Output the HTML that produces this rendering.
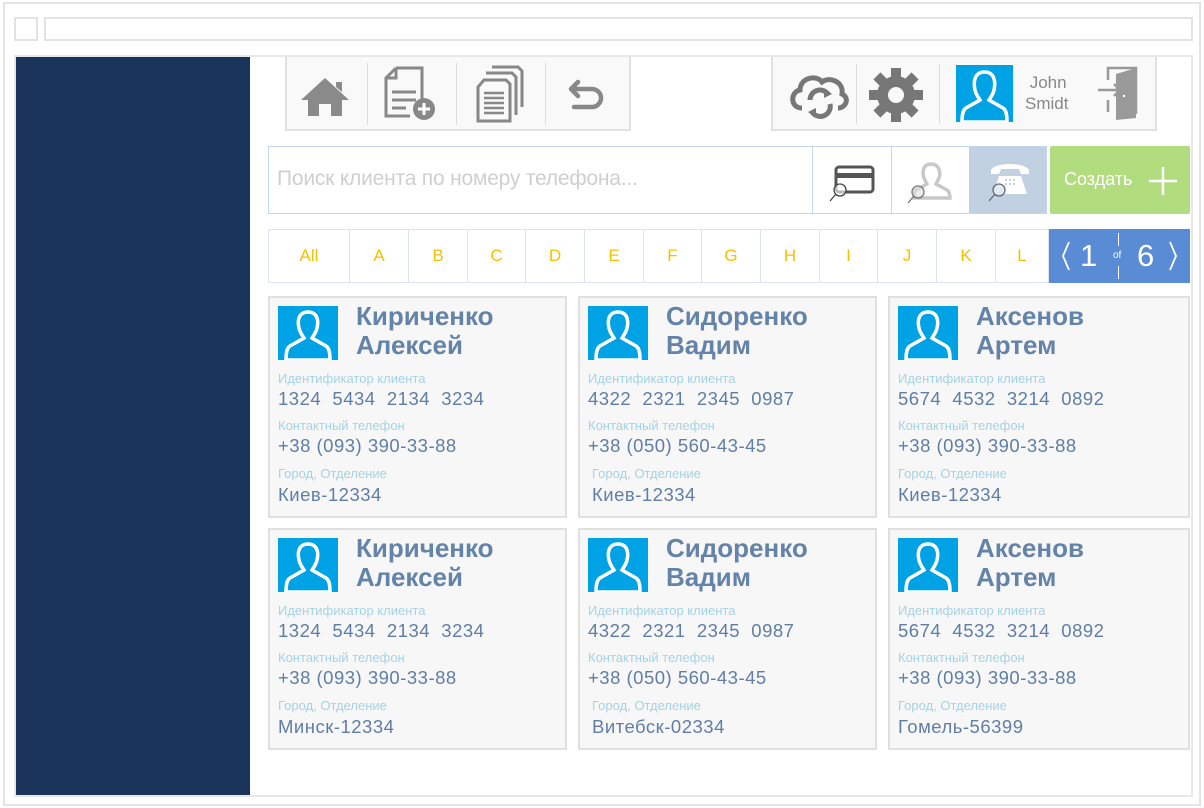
<!DOCTYPE html>
<html><head><meta charset="utf-8"><style>
*{margin:0;padding:0;box-sizing:border-box}
body{width:1204px;height:808px;background:#fff;position:relative;overflow:hidden;font-family:"Liberation Sans","DejaVu Sans",sans-serif}
.a{position:absolute}
.card{position:absolute;width:299px;height:222px;background:#f7f7f7;border:2px solid #e0e0e0}
.card .av{position:absolute;left:8px;top:8px;width:60px;height:54px;background:#00a2e6}
.card .nm{position:absolute;left:86px;top:4px;font-size:26px;font-weight:bold;line-height:29px;color:#6483a9}
.card .l{position:absolute;left:8px;font-size:13px;color:#a4d3e4}
.card .v{position:absolute;left:8px;font-size:18.5px;color:#5f7ea5;letter-spacing:.5px;white-space:pre}
.alpha{position:absolute;top:229px;height:54px;border:1px solid #dbe4ef;border-left:none;color:#f5c000;font-size:17px;text-align:center;line-height:52px;background:#fff}
.sep{position:absolute;width:1px;background:#ddd}
</style></head><body>
<div class="a" style="left:3px;top:2px;width:1198px;height:804px;border:2px solid #e4e4e4"></div>
<div class="a" style="left:14px;top:17px;width:24px;height:24px;border:2px solid #e2e2e2"></div>
<div class="a" style="left:44px;top:17px;width:1149px;height:24px;border:2px solid #e2e2e2"></div>
<div class="a" style="left:14px;top:55px;width:1179px;height:742px;border:2px solid #e8e8e8;border-right:2px solid #e8e8e8"></div>
<div class="a" style="left:16px;top:57px;width:234px;height:738px;background:#19335a"></div>

<!-- left toolbar -->
<div class="a" style="left:285px;top:57px;width:346px;height:74px;background:#f9f9f9;border:2px solid #e0e0e0;border-top:none"></div>
<div class="sep" style="left:367px;top:63px;height:62px"></div>
<div class="sep" style="left:456px;top:63px;height:62px"></div>
<div class="sep" style="left:545px;top:63px;height:62px"></div>
<svg class="a" style="left:300px;top:72px" width="50" height="46" viewBox="0 0 50 46"><path d="M1 28 L25 6 L49 28 H42 V44 H31 V32 H19 V44 H8 V28Z M36 10h6v10l-6-5z" fill="#8a8a8a"/></svg>
<svg class="a" style="left:384px;top:66px" width="54" height="56" viewBox="0 0 54 56"><path d="M12 2 H38 V36 M12 2 L2 12 V50 H26 M2 12 H12 V2" fill="none" stroke="#888" stroke-width="3"/><path d="M8 26h24M8 34h24M8 42h14" stroke="#888" stroke-width="3"/><circle cx="40" cy="43" r="11" fill="#888"/><path d="M40 37v12M34 43h12" stroke="#fff" stroke-width="3"/></svg>
<svg class="a" style="left:474px;top:65px" width="52" height="58" viewBox="0 0 52 58"><path d="M18 2h26l4 4v36M12 8h26l4 4v38M4 22 L10 15 H32 L36 19 V56 H4Z" fill="#f9f9f9" stroke="#888" stroke-width="3"/><path d="M10 28h20M10 33h20M10 38h20M10 43h20M10 48h20" stroke="#888" stroke-width="2.5"/></svg>
<svg class="a" style="left:568px;top:78px" width="40" height="34" viewBox="0 0 40 34"><path d="M10 4 L3 11 L10 18 M4 11 H24 A9 9 0 0 1 24 29 H6" fill="none" stroke="#888" stroke-width="4.5" stroke-linecap="round" stroke-linejoin="round"/></svg>

<!-- right toolbar -->
<div class="a" style="left:771px;top:57px;width:386px;height:74px;background:#f9f9f9;border:2px solid #e0e0e0;border-top:none"></div>
<div class="sep" style="left:856px;top:64px;height:60px"></div>
<div class="sep" style="left:939px;top:64px;height:60px"></div>
<svg class="a" style="left:788px;top:70px" width="62" height="54" viewBox="0 0 62 54"><path d="M14 38 C2 38 2 22 12 20 C12 8 28 4 34 12 C42 6 56 12 54 24 C62 28 58 38 50 38" fill="none" stroke="#777" stroke-width="5"/><path d="M22 30 A10 10 0 0 1 40 24 M42 34 A10 10 0 0 1 24 42" fill="none" stroke="#777" stroke-width="5"/><path d="M36 18l8 6-8 4zM28 48l-8-6 8-4z" fill="#777"/></svg>
<svg class="a" style="left:868px;top:67px" width="56" height="56" viewBox="-28 -28 56 56"><g fill="#777"><circle r="19"/><g id="t"><rect x="-5" y="-27" width="10" height="12"/></g><use href="#t" transform="rotate(45)"/><use href="#t" transform="rotate(90)"/><use href="#t" transform="rotate(135)"/><use href="#t" transform="rotate(180)"/><use href="#t" transform="rotate(225)"/><use href="#t" transform="rotate(270)"/><use href="#t" transform="rotate(315)"/></g><circle r="8" fill="#f9f9f9"/></svg>
<svg class="a" style="left:956px;top:65px" width="57" height="57" viewBox="0 0 57 57"><rect width="57" height="57" fill="#00a2e6"/><path d="M28.5 7 C19 7 17 16 19 25 C20 30 23 33 24 35 L10 43 C7 45 6 49 6 57 H51 C51 49 50 45 47 43 L33 35 C34 33 37 30 38 25 C40 16 38 7 28.5 7Z" fill="none" stroke="#fff" stroke-width="3.5"/></svg>
<div class="a" style="left:1025px;top:72px;font-size:17px;color:#888;line-height:21px">&nbsp;John<br>Smidt</div>
<svg class="a" style="left:1096px;top:66px" width="46" height="56" viewBox="0 0 46 56"><path d="M12 14 V2 H40 V48 M12 34 V46" fill="none" stroke="#999" stroke-width="2.5"/><path d="M20 8 L40 2 V52 L20 54Z" fill="#999"/><circle cx="28" cy="30" r="1.2" fill="#fff"/><path d="M2 24 H24 M18 18 L24 24 L18 30" fill="none" stroke="#999" stroke-width="2.5"/></svg>

<!-- search -->
<div class="a" style="left:268px;top:146px;width:779px;height:68px;border:1px solid #c6d6ea;background:#fff"></div>
<div class="a" style="left:277px;top:167px;font-size:21px;color:#cfcfcf;font-family:'Liberation Sans Narrow','Liberation Sans',sans-serif;letter-spacing:-.2px">Поиск клиента по номеру телефона...</div>
<div class="a" style="left:812px;top:147px;width:1px;height:66px;background:#c6d6ea"></div>
<div class="a" style="left:891px;top:147px;width:1px;height:66px;background:#c6d6ea"></div>
<div class="a" style="left:969px;top:147px;width:77px;height:66px;background:#c2d1e2"></div>
<svg class="a" style="left:828px;top:164px" width="50" height="40" viewBox="0 0 50 40"><rect x="8" y="3" width="37" height="25" rx="3" fill="none" stroke="#555" stroke-width="3"/><rect x="8" y="9" width="37" height="5" fill="#555"/><circle cx="12" cy="26" r="6" fill="#fff" fill-opacity=".6" stroke="#444" stroke-width="1.3"/><path d="M8 30 L2 37" stroke="#444" stroke-width="1.3"/></svg>
<svg class="a" style="left:906px;top:160px" width="50" height="46" viewBox="0 0 50 46"><path d="M25 4 C17 4 16 12 18 18 C19 21 21 23 21 24 L10 30 C8 31 8 35 8 38 H44 C44 35 43 31 41 30 L30 24 C30 23 32 21 33 18 C35 12 33 4 25 4Z" fill="none" stroke="#c8c8c8" stroke-width="3.5"/><circle cx="12" cy="32" r="6" fill="#ddd" fill-opacity=".6" stroke="#777" stroke-width="1.3"/><path d="M8 36 L2 43" stroke="#777" stroke-width="1.3"/></svg>
<svg class="a" style="left:985px;top:160px" width="50" height="46" viewBox="0 0 50 46"><path d="M6 10 C10 2 40 2 44 10 L44 14 L36 14 L34 9 H16 L14 14 L6 14Z" fill="#fff"/><path d="M14 16 H36 L42 34 H8Z" fill="#fff"/><g fill="#c2d1e2"><rect x="20" y="19" width="2" height="2"/><rect x="24" y="19" width="2" height="2"/><rect x="28" y="19" width="2" height="2"/><rect x="20" y="23" width="2" height="2"/><rect x="24" y="23" width="2" height="2"/><rect x="28" y="23" width="2" height="2"/></g><circle cx="14" cy="30" r="6" fill="#d0dae6" fill-opacity=".6" stroke="#667" stroke-width="1.3"/><path d="M10 34 L4 41" stroke="#667" stroke-width="1.3"/></svg>
<div class="a" style="left:1050px;top:146px;width:140px;height:68px;background:#b1dd7e;border-radius:2px"></div>
<div class="a" style="left:1064px;top:169px;font-size:18px;color:#fff">Создать</div>
<svg class="a" style="left:1148px;top:166px" width="30" height="30"><path d="M15 1V29M1 15H29" stroke="#fff" stroke-width="2.5"/></svg>

<!-- alphabet -->
<div class="alpha" style="left:268px;width:82px;border-left:1px solid #dbe4ef">All</div>
<div class="alpha" style="left:350px;width:59px">A</div>
<div class="alpha" style="left:409px;width:59px">B</div>
<div class="alpha" style="left:468px;width:58px">C</div>
<div class="alpha" style="left:526px;width:59px">D</div>
<div class="alpha" style="left:585px;width:59px">E</div>
<div class="alpha" style="left:644px;width:58px">F</div>
<div class="alpha" style="left:702px;width:59px">G</div>
<div class="alpha" style="left:761px;width:59px">H</div>
<div class="alpha" style="left:820px;width:58px">I</div>
<div class="alpha" style="left:878px;width:59px">J</div>
<div class="alpha" style="left:937px;width:59px">K</div>
<div class="alpha" style="left:996px;width:53px">L</div>
<div class="a" style="left:1049px;top:229px;width:141px;height:54px;background:#5a8cd5"></div>
<svg class="a" style="left:1060px;top:240px" width="12" height="32"><path d="M9 2 L3 16 L9 30" fill="none" stroke="#fff" stroke-width="1.8"/></svg>
<svg class="a" style="left:1167px;top:240px" width="12" height="32"><path d="M3 2 L9 16 L3 30" fill="none" stroke="#fff" stroke-width="1.8"/></svg>
<div class="a" style="left:1080px;top:238px;font-size:31px;color:#fff">1</div>
<div class="a" style="left:1118px;top:233px;width:1px;height:13px;background:#fff"></div>
<div class="a" style="left:1118px;top:266px;width:1px;height:13px;background:#fff"></div>
<div class="a" style="left:1113px;top:250px;font-size:10px;color:#fff">of</div>
<div class="a" style="left:1137px;top:238px;font-size:31px;color:#fff">6</div>

<svg width="0" height="0" style="position:absolute"><defs><symbol id="p" viewBox="0 0 60 54"><path d="M30 6 C21 6 19 14 21 22 C22 27 25 30 26 32 L12 40 C9 42 8 46 8 54 H52 C52 46 51 42 48 40 L34 32 C35 30 38 27 39 22 C41 14 39 6 30 6Z" fill="none" stroke="#fff" stroke-width="3.5"/></symbol></defs></svg>

<!-- cards -->
<div class="card" style="left:268px;top:296px"><div class="av"><svg width="60" height="54"><use href="#p"/></svg></div><div class="nm">Кириченко<br>Алексей</div><div class="l" style="top:73px">Идентификатор клиента</div><div class="v" style="top:90px">1324  5434  2134  3234</div><div class="l" style="top:120px">Контактный телефон</div><div class="v" style="top:137px">+38 (093) 390-33-88</div><div class="l" style="top:168px">Город, Отделение</div><div class="v" style="top:186px">Киев-12334</div></div>
<div class="card" style="left:578px;top:296px"><div class="av"><svg width="60" height="54"><use href="#p"/></svg></div><div class="nm">Сидоренко<br>Вадим</div><div class="l" style="top:73px">Идентификатор клиента</div><div class="v" style="top:90px">4322  2321  2345  0987</div><div class="l" style="top:120px">Контактный телефон</div><div class="v" style="top:137px">+38 (050) 560-43-45</div><div class="l" style="top:168px;left:12px">Город, Отделение</div><div class="v" style="top:186px;left:12px">Киев-12334</div></div>
<div class="card" style="left:888px;top:296px;width:302px"><div class="av"><svg width="60" height="54"><use href="#p"/></svg></div><div class="nm">Аксенов<br>Артем</div><div class="l" style="top:73px">Идентификатор клиента</div><div class="v" style="top:90px">5674  4532  3214  0892</div><div class="l" style="top:120px">Контактный телефон</div><div class="v" style="top:137px">+38 (093) 390-33-88</div><div class="l" style="top:168px">Город, Отделение</div><div class="v" style="top:186px">Киев-12334</div></div>

<div class="card" style="left:268px;top:528px"><div class="av"><svg width="60" height="54"><use href="#p"/></svg></div><div class="nm">Кириченко<br>Алексей</div><div class="l" style="top:73px">Идентификатор клиента</div><div class="v" style="top:90px">1324  5434  2134  3234</div><div class="l" style="top:120px">Контактный телефон</div><div class="v" style="top:137px">+38 (093) 390-33-88</div><div class="l" style="top:168px">Город, Отделение</div><div class="v" style="top:186px">Минск-12334</div></div>
<div class="card" style="left:578px;top:528px"><div class="av"><svg width="60" height="54"><use href="#p"/></svg></div><div class="nm">Сидоренко<br>Вадим</div><div class="l" style="top:73px">Идентификатор клиента</div><div class="v" style="top:90px">4322  2321  2345  0987</div><div class="l" style="top:120px">Контактный телефон</div><div class="v" style="top:137px">+38 (050) 560-43-45</div><div class="l" style="top:168px;left:12px">Город, Отделение</div><div class="v" style="top:186px;left:12px">Витебск-02334</div></div>
<div class="card" style="left:888px;top:528px;width:302px"><div class="av"><svg width="60" height="54"><use href="#p"/></svg></div><div class="nm">Аксенов<br>Артем</div><div class="l" style="top:73px">Идентификатор клиента</div><div class="v" style="top:90px">5674  4532  3214  0892</div><div class="l" style="top:120px">Контактный телефон</div><div class="v" style="top:137px">+38 (093) 390-33-88</div><div class="l" style="top:168px">Город, Отделение</div><div class="v" style="top:186px">Гомель-56399</div></div>
</body></html>
